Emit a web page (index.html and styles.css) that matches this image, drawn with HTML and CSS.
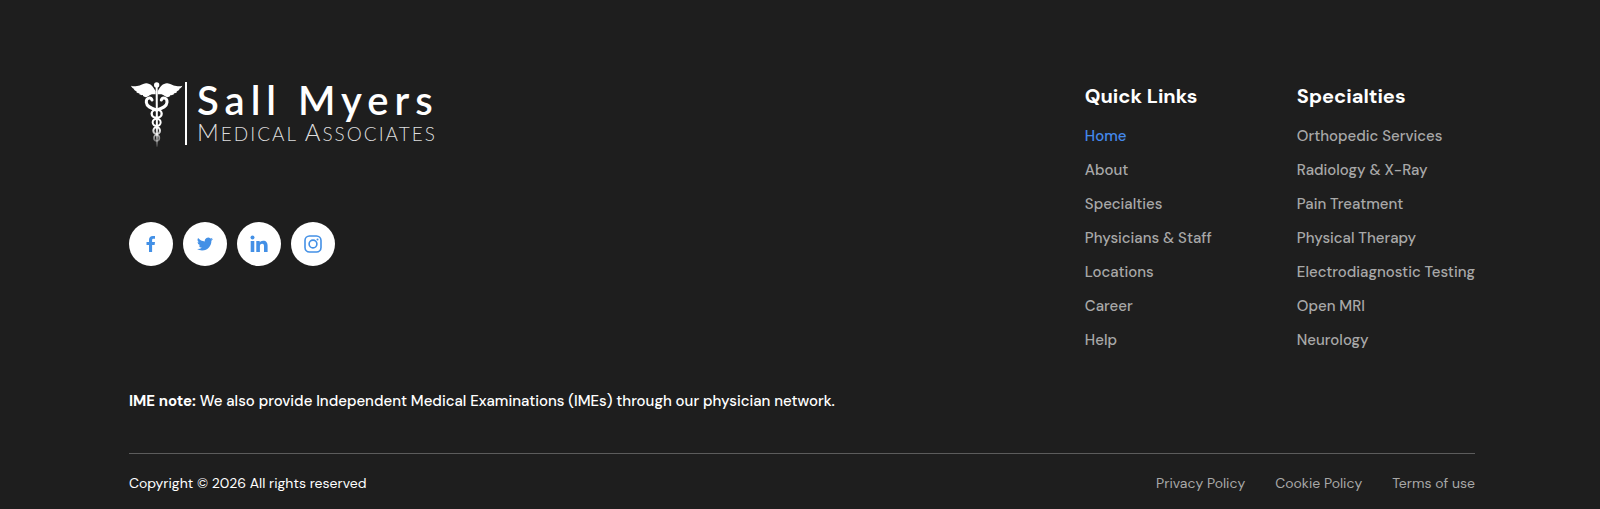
FILE: index.html
```
<!DOCTYPE html>
<html lang="en">
<head>
  <meta charset="UTF-8">
  <meta name="viewport" content="width=device-width, initial-scale=1.0">
  <title>Sall Myers Medical Associates</title>
  <link rel="stylesheet" href="styles.css">
</head>
<body>
  <footer class="footer">
    <div class="footer-top">
      <div class="brand">
        <a href="#" class="logo">
          <svg class="logo-mark" viewBox="0 0 156 195" aria-hidden="true">
            <defs>
              <linearGradient id="fade" gradientUnits="userSpaceOnUse" x1="0" y1="0" x2="0" y2="195">
                <stop offset="0.7" stop-color="#fff"/>
                <stop offset="1" stop-color="#fff" stop-opacity="0.1"/>
              </linearGradient>
            </defs>
            <!-- wings -->
            <path fill="#fff" d="M74 28 C67 14 57 3 45 4 C36 5 30 11 18 12 C11 13 6 13 0 11 C2 17 7 20 11 21 L8 22 C11 26 14 27 18 28 L15 29 C18 33 22 34 26 34 L24 36 C28 39 32 40 36 39 L36 42 C42 47 48 46 53 42 C58 36 65 36 74 37Z"/>
            <path fill="#fff" d="M80 28 C87 14 97 3 109 4 C118 5 124 11 136 12 C143 13 148 13 154 11 C152 17 147 20 143 21 L146 22 C143 26 140 27 136 28 L139 29 C136 33 132 34 128 34 L130 36 C126 39 122 40 118 39 L118 42 C112 47 106 46 101 42 C96 36 89 36 80 37Z"/>
            <circle cx="77" cy="9" r="8" fill="#fff"/>
            <!-- staff and snakes -->
            <g fill="none" stroke="url(#fade)" stroke-linecap="round">
              <path stroke-width="6" d="M77 14 L78 192"/>
              <path stroke-width="9" d="M63 54 C60 45 45 46 46 61 C47 73 58 78 76 84"/>
              <path stroke-width="9" d="M91 54 C94 45 109 46 108 61 C107 73 96 78 78 84"/>
              <ellipse cx="77" cy="95" rx="15" ry="12" stroke-width="7"/>
              <ellipse cx="77" cy="121" rx="12" ry="11" stroke-width="6"/>
              <ellipse cx="77" cy="146" rx="10" ry="10" stroke-width="6"/>
              <ellipse cx="77" cy="168" rx="8" ry="9" stroke-width="5"/>
            </g>
          </svg>
          <span class="logo-text">
            <span class="logo-name">Sall Myers</span>
            <span class="logo-sub"><span class="cap">M</span>EDICAL <span class="cap">A</span>SSOCIATES</span>
          </span>
        </a>

        <div class="social">
          <a href="#" aria-label="Facebook">
            <svg width="18" height="18" viewBox="0 0 18 18"><path d="M7 17 V10 H4.500 V7.100 H7 V4.800 C7 2.300 8.500 1 10.800 1 H13 V3.700 H11.600 C10.400 3.700 10.100 4.200 10.100 5.200 V7.100 H13 L12.600 10 H10.100 V17Z"/></svg>
          </a>
          <a href="#" aria-label="Twitter">
            <svg width="16" height="16" viewBox="0 0 24 24"><path d="M23.950 4.570a10 10 0 0 1-2.820.770 4.960 4.960 0 0 0 2.160-2.720c-.950.550-2 .960-3.130 1.180a4.920 4.920 0 0 0-8.380 4.480C7.690 8.090 4.070 6.130 1.640 3.160a4.900 4.900 0 0 0 1.520 6.570 4.900 4.900 0 0 1-2.230-.610v.060a4.920 4.920 0 0 0 3.950 4.830 5 5 0 0 1-2.210.080 4.940 4.940 0 0 0 4.600 3.420A9.870 9.870 0 0 1 0 19.540a14 14 0 0 0 7.550 2.210c9.050 0 14-7.500 14-13.980 0-.210 0-.420-.020-.630a9.940 9.940 0 0 0 2.460-2.550z"/></svg>
          </a>
          <a href="#" aria-label="LinkedIn">
            <svg width="18" height="18" viewBox="0 0 18 18"><circle cx="2.500" cy="2.500" r="2"/><path d="M.7 6 H4.300 V17 H.7Z M6.300 6 H9.700 V7.500 C10.300 6.500 11.400 5.700 13.100 5.700 C16.400 5.700 17.600 7.800 17.600 10.700 V17 H14 V11.400 C14 9.800 13.700 8.700 12.100 8.700 C10.500 8.700 9.900 9.700 9.900 11.400 V17 H6.300Z"/></svg>
          </a>
          <a href="#" aria-label="Instagram">
            <svg width="18" height="18" viewBox="0 0 18 18"><g fill="none" stroke="currentColor" stroke-width="1.600"><rect x="1" y="1" width="16" height="16" rx="4.500"/><circle cx="9" cy="9" r="3.900"/></g><circle cx="13.500" cy="4.500" r="1"/></svg>
          </a>
        </div>
      </div>

      <nav class="links">
        <div class="links-col">
          <h2>Quick Links</h2>
          <ul>
            <li><a href="#" class="active">Home</a></li>
            <li><a href="#">About</a></li>
            <li><a href="#">Specialties</a></li>
            <li><a href="#">Physicians &amp; Staff</a></li>
            <li><a href="#">Locations</a></li>
            <li><a href="#">Career</a></li>
            <li><a href="#">Help</a></li>
          </ul>
        </div>
        <div class="links-col">
          <h2>Specialties</h2>
          <ul>
            <li><a href="#">Orthopedic Services</a></li>
            <li><a href="#">Radiology &amp; X-Ray</a></li>
            <li><a href="#">Pain Treatment</a></li>
            <li><a href="#">Physical Therapy</a></li>
            <li><a href="#">Electrodiagnostic Testing</a></li>
            <li><a href="#">Open MRI</a></li>
            <li><a href="#">Neurology</a></li>
          </ul>
        </div>
      </nav>
    </div>

    <p class="note"><strong>IME note:</strong> We also provide Independent Medical Examinations (IMEs) through our physician network.</p>

    <div class="footer-bottom">
      <p>Copyright © 2026 All rights reserved</p>
      <div class="legal">
        <a href="#">Privacy Policy</a>
        <a href="#">Cookie Policy</a>
        <a href="#">Terms of use</a>
      </div>
    </div>
  </footer>
</body>
</html>
```
FILE: styles.css
```
* {
  margin: 0;
  padding: 0;
  box-sizing: border-box;
}
body {
  background: #1e1e1e;
  color: #fff;
  font-family: "DM Sans", Inter, sans-serif;
  font-size: 15px;
  font-weight: 500;
  line-height: 24px;
}
a {
  color: #a8a8a8;
  text-decoration: none;
}
a:hover {
  color: #4489ec;
}
.footer {
  padding: 80px 125px 12px 129px;
}
.footer-top {
  display: flex;
  justify-content: space-between;
}
.logo {
  display: flex;
  color: #fff;
  padding: 2px 0 0 2px;
}
.logo-mark {
  width: 52px;
  height: 65px;
}
.logo-text {
  display: flex;
  flex-direction: column;
  height: 63px;
  margin-left: 2px;
  padding-left: 10px;
  border-left: 2px solid #fff;
  font-family: Lato, sans-serif;
  white-space: nowrap;
}
.logo-name {
  font-size: 40px;
  font-weight: 600;
  line-height: 36px;
  letter-spacing: 6px;
}
.logo-sub {
  font-size: 19px;
  font-weight: 300;
  line-height: 28px;
  letter-spacing: 2px;
  color: #ddd;
}
.cap {
  font-size: 24px;
}
.social {
  display: flex;
  gap: 10px;
  margin-top: 75px;
}
.social a {
  display: flex;
  align-items: center;
  justify-content: center;
  width: 44px;
  height: 44px;
  border-radius: 50%;
  background: #fff;
  color: #4390e6;
}
.social svg {
  fill: currentColor;
}
.links {
  display: flex;
  gap: 85px;
}
.links h2 {
  font-size: 20px;
  line-height: 32px;
  margin-bottom: 12px;
}
.links ul {
  display: flex;
  flex-direction: column;
  gap: 10px;
  list-style: none;
}
.links .active {
  color: #4489ec;
}
.note {
  margin-top: 37px;
}
.footer-bottom {
  display: flex;
  justify-content: space-between;
  margin-top: 40px;
  padding-top: 17px;
  border-top: 1px solid #5c5c5c;
  font-size: 14px;
  font-weight: 400;
}
.legal {
  display: flex;
  gap: 30px;
}
```
